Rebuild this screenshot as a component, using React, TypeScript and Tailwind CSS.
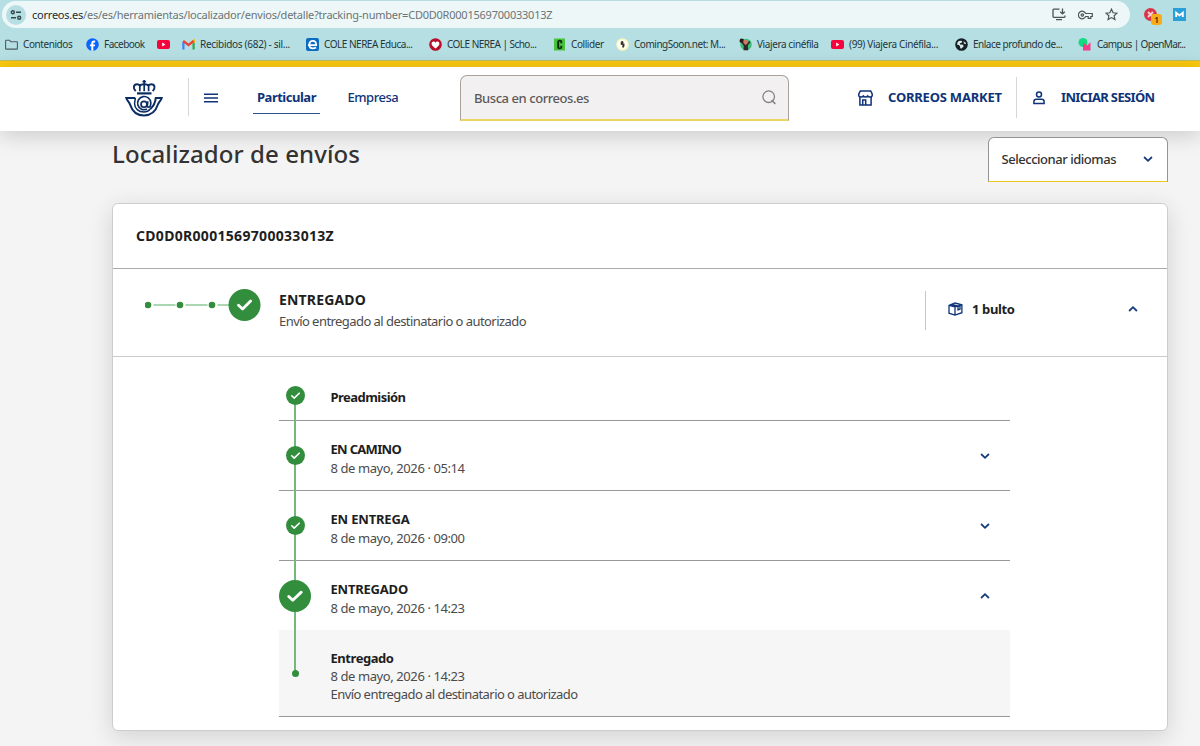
import type { ReactNode } from "react";

function Check({ className, stroke = 1.7 }: { className: string; stroke?: number }) {
  return (
    <svg viewBox="0 0 20 20" className={className}>
      <circle cx="10" cy="10" r="10" fill="#328d3d" />
      <path d="M6.1 10.3 8.6 12.7 13.9 7.6" fill="none" stroke="#fff" strokeWidth={stroke} strokeLinecap="round" strokeLinejoin="round" />
    </svg>
  );
}

function Chevron({ up = false }: { up?: boolean }) {
  return (
    <svg viewBox="0 0 10 8" className="h-2 w-2.5 shrink-0" fill="none" stroke="#173a7c" strokeWidth="1.8">
      <path d={up ? "M1.1 6 5 2.2 8.9 6" : "M1.1 2 5 5.8 8.9 2"} />
    </svg>
  );
}

function YouTube() {
  return (
    <svg viewBox="0 0 13 13" className="size-[13px]">
      <rect x="0" y="2" width="13" height="9" rx="2" fill="#f6043c" />
      <path d="M5.2 4.6v3.8l3.2-1.9z" fill="#fff" />
    </svg>
  );
}

const icons: Record<string, ReactNode> = {
  folder: (
    <svg viewBox="0 0 13 13" className="size-[13px]" fill="none" stroke="#4d5b60" strokeWidth="1.1">
      <path d="M.6 10.4V2.9q0-.7.7-.7h3.2l1.3 1.5h5.9q.7 0 .7.7v6q0 .7-.7.7H1.3q-.7 0-.7-.7z" />
    </svg>
  ),
  facebook: (
    <svg viewBox="0 0 13 13" className="size-[13px]">
      <circle cx="6.5" cy="6.5" r="6.3" fill="#0866ff" />
      <path d="M5.3 12.7V8.3H3.9V6.4h1.4v-1c0-1.9.9-2.8 2.7-2.8.5 0 .9 0 1.2.1v1.7h-.8c-.8 0-1.1.4-1.1 1.1v.9h1.8L8.8 8.3H7.3v4.4z" fill="#fff" />
    </svg>
  ),
  youtube: <YouTube />,
  gmail: (
    <svg viewBox="0 0 13 13" className="size-[13px]" fill="none" strokeWidth="2.3">
      <path d="M1.4 11.5V4" stroke="#4285f4" />
      <path d="M11.6 11.5V4" stroke="#34a853" />
      <path d="M11.6 5V2.8L9.6 4.3" stroke="#fbbc04" />
      <path d="M1.2 2.8 6.5 7l5.3-4.2" stroke="#ea4335" />
    </svg>
  ),
  educa: (
    <svg viewBox="0 0 13 13" className="size-[13px]" fill="none">
      <rect width="13" height="13" rx="2" fill="#0c6cc0" />
      <path d="M2 7.2h8.2C10.4 4.4 9 2.9 6.8 2.9 4.7 2.9 3.3 4.5 3.3 6.7c0 2.5 1.5 3.6 3.6 3.6 1.2 0 2.2-.3 3.2-.9" stroke="#fff" strokeWidth="1.8" />
    </svg>
  ),
  heart: (
    <svg viewBox="0 0 13 13" className="size-[13px]">
      <circle cx="6.5" cy="6.5" r="6.3" fill="#b80d2b" />
      <path d="M6.5 10.6C3.6 8.6 2.6 7.2 2.6 5.6c0-2.5 2.9-2.9 3.9-.9 1-2 3.9-1.6 3.9.9 0 1.6-1 3-3.9 5z" fill="#fff" />
    </svg>
  ),
  collider: (
    <svg viewBox="0 0 13 13" className="size-[13px]" fill="none">
      <rect x="1" y="0.5" width="11" height="12" fill="#48c23d" />
      <path d="M8.3 5.2V3.5Q8.3 2.6 6.8 2.6T5.2 3.5v6q0 .9 1.5.9t1.6-.9V7.7" stroke="#082d0c" strokeWidth="1.9" />
    </svg>
  ),
  soon: (
    <svg viewBox="0 0 13 13" className="size-[13px]">
      <circle cx="6.5" cy="6.5" r="6.3" fill="#fbf9bf" />
      <circle cx="6.5" cy="6.5" r="4.8" fill="#fffef0" />
      <path d="M4.8 3.5 6.5 3l1.3 1.2-1 1 1.8.6-.3 2.9-1.3 1.3-.9-1.3.6-1.4-2-.6z" fill="#39352d" />
    </svg>
  ),
  viajera: (
    <svg viewBox="0 0 13 13" className="size-[13px]">
      <circle cx="7" cy="6.5" r="5.8" fill="#3cbf78" />
      <circle cx="2.8" cy="2.8" r="2.3" fill="#2a1c1b" />
      <path d="M2 4 5 4.2l3 1 2.5-2.4.8 1.5L8.8 7.5l.5 4.8H4.5L4.8 8z" fill="#35282a" />
      <path d="M4.5 2h4v3.5L6.5 7 4.5 5z" fill="#d07a65" />
    </svg>
  ),
  globe: (
    <svg viewBox="0 0 13 13" className="size-[13px]">
      <circle cx="6.5" cy="6.5" r="6.3" fill="#172126" />
      <path d="M2.2 6.8C2 4.5 3 3 4.8 2.7l2.4.4-.5 1.6-1.9.6.3 1.1 3 .3.5 1.7-2.2 2.1-1.3-.3.1-1.6-1.3-1.5z" fill="#dcebed" />
      <path d="M8.6 3.2 10.7 4.8l.2 1.5-2-.7z" fill="#dcebed" />
    </svg>
  ),
  campus: (
    <svg viewBox="0 0 14 13" className="h-[13px] w-[14px]">
      <circle cx="5" cy="4.5" r="4.5" fill="#12db80" />
      <path d="M5 5.5h1.5L9 7.5l3.5-3.3V12.5H5z" fill="#f43e88" />
    </svg>
  ),
};

const bookmarks: { icon: string; label: string; box: string; text: string }[] = [
  { icon: "folder", label: "Contenidos", box: "w-[81px] gap-1.5", text: "tracking-[-0.42px]" },
  { icon: "facebook", label: "Facebook", box: "w-[71px]", text: "tracking-[-0.52px]" },
  { icon: "youtube", label: "", box: "w-[25px]", text: "" },
  { icon: "gmail", label: "Recibidos (682) - sil...", box: "w-[124px]", text: "tracking-[-0.297px]" },
  { icon: "educa", label: "COLE NEREA Educa...", box: "w-[123px]", text: "tracking-[-0.48px]" },
  { icon: "heart", label: "COLE NEREA | Scho...", box: "w-[124px]", text: "tracking-[-0.53px]" },
  { icon: "collider", label: "Collider", box: "w-[63px] gap-1", text: "tracking-[-0.42px]" },
  { icon: "soon", label: "ComingSoon.net: M...", box: "w-[123px]", text: "tracking-[-0.48px]" },
  { icon: "viajera", label: "Viajera cinéfila", box: "w-[92px]", text: "tracking-[-0.404px]" },
  { icon: "youtube", label: "(99) Viajera Cinéfila...", box: "w-[124px]", text: "tracking-[-0.357px]" },
  { icon: "globe", label: "Enlace profundo de...", box: "w-[123px] gap-1", text: "tracking-[-0.49px]" },
  { icon: "campus", label: "Campus | OpenMar...", box: "w-[110px] gap-[3px]", text: "tracking-[-0.62px]" },
];

function BrowserBar() {
  return (
    <div className="h-[61px] shrink-0 border-b border-[#b9bd62] bg-[#b6dfe3]">
      <div className="flex h-7 items-start pt-px">
        <div className="ml-0.5 flex h-[27px] w-[1128px] items-center rounded-full bg-[#eef7f7] pl-1">
          <div className="flex size-5 items-center justify-center rounded-full bg-[#b6dfe3]">
            <svg viewBox="0 0 12 12" className="size-3" fill="none" stroke="#33474c" strokeWidth="1.4">
              <circle cx="2.8" cy="3.3" r="1.5" />
              <path d="M6 3.3h5M1 8.7h5" />
              <circle cx="9.2" cy="8.7" r="1.5" />
            </svg>
          </div>
          <p className="ml-1.5 flex-1 whitespace-nowrap text-[11px] leading-4 tracking-[-0.227px] text-[#6b7476]">
            <span className="text-[#1f2a2d]">correos.es</span>
            /es/es/herramientas/localizador/envios/detalle?tracking-number=CD0D0R0001569700033013Z
          </p>
          <svg viewBox="0 0 14 13" className="h-[13px] w-3.5" fill="none" stroke="#4a5457" strokeWidth="1.3">
            <path d="M7.5 1.2H1.7q-.7 0-.7.7v6.7q0 .7.7.7h10.6q.7 0 .7-.7V7.5M4 11.6h6M10.5.5v5M8.2 3.7l2.3 2.2 2.3-2.2" />
          </svg>
          <svg viewBox="0 0 15 10" className="ml-3 h-2.5 w-[15px]" fill="none" stroke="#4a5457" strokeWidth="1.2">
            <path d="M7.7 3.5h6.6v3h-1.5v1.8h-2.6V6.5H7.7A3.8 3.8 0 1 1 7.7 3.5z" />
            <circle cx="4.3" cy="5" r="1.2" />
          </svg>
          <svg viewBox="0 0 13 13" className="ml-3 mr-3 size-[13px]" fill="none" stroke="#4a5457" strokeWidth="1.2">
            <path d="M6.5 1.2 8.1 4.8l3.9.4L9.1 7.8l.8 3.8-3.4-2-3.4 2 .8-3.8L1 5.2l3.9-.4z" />
          </svg>
        </div>
        <div className="relative ml-3.5 mt-[7px] size-[13px]">
          <svg viewBox="0 0 13 13" className="size-[13px]">
            <circle cx="6.5" cy="6.5" r="6.5" fill="#d9354a" />
            <path d="m4 4 5 5M9 4 4 9" stroke="#f5cdd1" strokeWidth="2" />
          </svg>
          <span className="absolute left-[7px] top-[6px] flex size-[11px] items-center justify-center rounded-[3px] bg-[#f6ad17] text-[8px] font-semibold leading-none text-[#2a2108]">1</span>
        </div>
        <svg viewBox="0 0 13 13" className="ml-4 mt-[7px] size-[13px]">
          <rect width="13" height="13" fill="#2a9fd8" />
          <path d="M3.2 9V4.8l3.3 2.6 3.3-2.6V9" fill="none" stroke="#fff" strokeWidth="1.9" />
        </svg>
      </div>
      <div className="flex h-8 items-center pl-[5px]">
        {bookmarks.map((b, i) => (
          <div key={i} className={`flex shrink-0 items-center gap-[5px] whitespace-nowrap text-[10px] leading-4 text-[#24363a] ${b.box}`}>
            {icons[b.icon]}
            {b.label && <span className={b.text}>{b.label}</span>}
          </div>
        ))}
      </div>
    </div>
  );
}

function Logo() {
  return (
    <svg viewBox="0 0 38 37" className="h-[37px] w-[38px]" fill="none" stroke="#0b2d63" strokeWidth="2">
      <path d="M19.2 0v4.500M17.500 1.700h3.400" strokeWidth="1.7" />
      <path d="M10.700 11.200C7.600 8 8.600 4.300 12 4.300c1.400 0 2.300.5 2.800 1.300 1.500-1.900 7.300-1.900 8.800 0 .5-.8 1.400-1.300 2.800-1.300 3.400 0 4.400 3.700 1.300 6.900" strokeWidth="1.9" />
      <path d="M14.8 11.200V5.600M19.200 11.200V4M23.600 11.200V5.600" strokeWidth="1.7" />
      <path d="M12 13.400h14.500" strokeWidth="2.2" />
      <path d="M10.300 17.900H1.300c.7 2.800 2.800 3.800 3.700 6.400 2.200 6.800 7 11.200 14 11.200s11.800-4.400 14-11.200c.9-2.600 3-3.600 3.700-6.400h-5.900c-.5 5-2.500 8.500-5.500 11.200" />
      <path d="M10.300 17.900c0 2-.7 3.600-.7 5.900 0 4.600 3.900 8.200 9.400 8.200 2.500 0 4.700-1 6.300-2.900" strokeWidth="1.5" />
      <path d="M22 29.100a6.600 6.600 0 1 1 3.800-6.400c0 2.800-.8 4.500-2.200 4.500-1.300 0-1.500-1.100-1.200-2.700l.5-3.200" strokeWidth="1.7" />
      <circle cx="19" cy="24.300" r="3" strokeWidth="1.7" />
    </svg>
  );
}

function Header() {
  return (
    <header className="z-10 flex h-[64px] shrink-0 items-start bg-white pl-[125px] text-[13px] leading-5 text-[#0f3378] shadow-[0_4px_22px_rgba(0,0,0,0.18)]">
      <div className="mt-[13px]"><Logo /></div>
      <div className="ml-[25px] mt-[11px] h-[38px] w-px bg-[#d6d6d6]" />
      <svg viewBox="0 0 14 10" className="ml-[15px] mt-[26px] h-2.5 w-3.5" stroke="#0f3378" strokeWidth="1.6">
        <path d="M0 1.300h14M0 5h14M0 8.700h14" />
      </svg>
      <nav className="ml-[35px] mt-5 flex whitespace-nowrap">
        <a className="flex h-[27px] w-[67px] justify-center border-b border-[#2c4f8f] font-bold tracking-[-0.483px]">Particular</a>
        <a className="ml-[27.5px] w-[59.5px] font-medium tracking-[-0.48px]">Empresa</a>
      </nav>
      <div className="ml-[53px] mt-2 flex h-[46px] w-[329px] items-center justify-between rounded-t-[7px] border-x border-b-2 border-t border-x-[#a9a19b] border-b-[#e9d566] border-t-[#a9a19b] bg-[#f2f0f0] pl-[13px] pr-3">
        <span className="font-medium tracking-[-0.435px] text-[#5c5a5a]">Busca en correos.es</span>
        <svg viewBox="0 0 14 15" className="h-[15px] w-3.5" fill="none" stroke="#858383" strokeWidth="1.3">
          <circle cx="6.7" cy="6.7" r="5.8" />
          <path d="m9.700 10 3.600 4" strokeWidth="1.7" />
        </svg>
      </div>
      <svg viewBox="0 0 15 16" className="ml-[69px] mt-[23px] h-4 w-[15px]" fill="none" stroke="#0f3378" strokeWidth="1.5">
        <path d="M2.300 1h10.400l1.500 3v1.800q-.7 1.300-2.300 1.200-1.500 0-2.200-1-.8 1-2.200 1t-2.200-1q-.7 1-2.200 1Q1.500 7.100.8 5.800V4z" />
        <path d="M1.900 7v7.900h11.200V7M4.700 14.500V9.900h3v4.600" />
      </svg>
      <span className="ml-[15px] mt-5 w-[128px] whitespace-nowrap font-bold tracking-[-0.21px]">CORREOS MARKET</span>
      <div className="mt-2.5 h-[41px] w-px bg-[#d6d6d6]" />
      <svg viewBox="0 0 12 14" className="ml-4 mt-6 h-3.5 w-3" fill="none" stroke="#0f3378" strokeWidth="1.5">
        <circle cx="6" cy="3.5" r="2.5" />
        <path d="M.9 12.600v-2Q.9 8.300 3.400 8.300h5.200q2.500 0 2.500 2.300v2z" />
      </svg>
      <span className="ml-4 mt-5 whitespace-nowrap font-bold tracking-[-0.64px]">INICIAR SESIÓN</span>
    </header>
  );
}

function Summary() {
  return (
    <div className="flex h-[88px] items-start border-b border-[#cbcbcb]">
      <svg viewBox="0 0 116 32" className="ml-8 mt-[19.5px] h-8 w-[116px]">
        <path d="M8.500 16h22M40.500 16h22M72.500 16H86" stroke="#5aae64" strokeWidth="1.2" />
        <circle cx="3" cy="16" r="3.300" fill="#328d3d" />
        <circle cx="35" cy="16" r="3.300" fill="#328d3d" />
        <circle cx="67" cy="16" r="3.300" fill="#328d3d" />
        <circle cx="99.500" cy="16" r="16" fill="#328d3d" />
        <path d="m93.500 16.200 4.100 3.900 8-8" fill="none" stroke="#fff" strokeWidth="2.8" strokeLinecap="round" strokeLinejoin="round" />
      </svg>
      <div className="ml-[18px] mt-[21px] flex-1 whitespace-nowrap">
        <p className="text-[14px] font-bold leading-5 tracking-[0.17px] text-[#1e1e1e]">ENTREGADO</p>
        <p className="mt-px text-[13px] leading-5 tracking-[-0.557px] text-[#4b4b4b]">Envío entregado al destinatario o autorizado</p>
      </div>
      <div className="mt-[22px] flex h-[39px] w-[242px] items-center border-l border-[#c6c6c6] pb-[3px] pl-[21.5px]">
        <svg viewBox="0 0 15 14" className="h-3.5 w-[15px]" fill="none" stroke="#0f3378" strokeWidth="1.3">
          <path d="M1 3.400 7 1l6.900 1.800v7.900L7 13 1 11.200zM1 3.400l6 1.400V13M7 4.800l6.900-2M3.700 2.500l6.300 1.500v3.800l2-.6V3.300" />
        </svg>
        <span className="ml-[9.5px] flex-1 text-[13px] font-bold leading-5 tracking-[-0.375px] text-[#1e1e1e]">1 bulto</span>
        <div className="mr-[29px]"><Chevron up /></div>
      </div>
    </div>
  );
}

function Step({ title, date, size, track, big = false, open = false }: { title: string; date: string; size: string; track: string; big?: boolean; open?: boolean }) {
  return (
    <li className={`flex items-center ${size}`}>
      <div className="relative flex w-8 justify-center">
        {big ? <Check className="size-8" stroke={1.8} /> : <Check className="size-[19px]" />}
      </div>
      <div className="ml-[19.5px] flex-1 whitespace-nowrap pt-[6px] text-[13px] leading-[18.5px]">
        <p className={`font-bold text-[#1e1e1e] ${track}`}>{title}</p>
        <p className="tracking-[-0.41px] text-[#4b4b4b]">{date}</p>
      </div>
      <div className="mr-5"><Chevron up={open} /></div>
    </li>
  );
}

function Timeline() {
  return (
    <ol className="relative ml-[166px] w-[731px]">
      <li className="flex h-16 border-b border-[#999]">
        <div className="relative z-10 mt-[28.5px] flex w-8 justify-center"><Check className="size-[19px]" /></div>
        <p className="ml-[19.5px] mt-[30px] text-[13px] font-bold leading-5 tracking-[-0.54px] text-[#1e1e1e]">Preadmisión</p>
      </li>
      <span className="absolute left-[15px] top-[40px] h-[276px] w-0.5 bg-[#74b97c]" />
      <Step title="EN CAMINO" date="8 de mayo, 2026 · 05:14" size="h-[70px] border-b border-[#999]" track="tracking-[-0.693px]" />
      <Step title="EN ENTREGA" date="8 de mayo, 2026 · 09:00" size="h-[70px] border-b border-[#999]" track="tracking-[-0.18px]" />
      <Step title="ENTREGADO" date="8 de mayo, 2026 · 14:23" size="h-[69px]" track="tracking-[-0.207px]" big open />
      <li className="flex h-[87px] items-center border-b border-[#999] bg-[#f7f6f7]">
        <div className="relative flex w-8 justify-center"><span className="size-[7px] rounded-full bg-[#328d3d]" /></div>
        <div className="ml-[19.5px] whitespace-nowrap pt-[6px] text-[13px] leading-[18.3px] text-[#4b4b4b]">
          <p className="font-bold tracking-[-0.448px] text-[#1e1e1e]">Entregado</p>
          <p className="tracking-[-0.41px]">8 de mayo, 2026 · 14:23</p>
          <p className="tracking-[-0.557px]">Envío entregado al destinatario o autorizado</p>
        </div>
      </li>
    </ol>
  );
}

export default function App() {
  return (
    <div className="flex h-[746px] w-[1200px] flex-col overflow-hidden bg-[#f4f4f4] font-['Noto_Sans','Open_Sans',sans-serif]">
      <BrowserBar />
      <div className="h-1.5 shrink-0 bg-[#fbc90f]" />
      <Header />
      <main className="pl-28">
        <div className="flex w-[1056px] items-start justify-between">
          <h1 className="relative z-20 mt-[7px] whitespace-nowrap text-[24px] font-medium leading-8 tracking-[0.084px] text-[#333]">Localizador de envíos</h1>
          <div className="relative z-20 mt-1.5 flex h-[45px] w-[180px] items-center justify-between rounded-t-[6px] border border-x-[#949494] border-b-[#ecc91a] border-t-[#949494] bg-white pb-0.5 pl-[12.5px] pr-3.5">
            <span className="whitespace-nowrap text-[13px] font-medium leading-5 tracking-[-0.466px] text-[#333]">Seleccionar idiomas</span>
            <Chevron />
          </div>
        </div>
        <section className="mt-[21px] h-[528px] w-[1056px] rounded-[6px] border border-[#cdcdcd] bg-white shadow-[0_6px_24px_rgba(0,0,0,0.14)]">
          <div className="flex h-[65px] items-center border-b border-[#aaa] pl-[23px]">
            <h2 className="text-[14px] font-bold leading-5 tracking-[0.308px] text-[#1e1e1e]">CD0D0R0001569700033013Z</h2>
          </div>
          <Summary />
          <Timeline />
        </section>
      </main>
    </div>
  );
}
